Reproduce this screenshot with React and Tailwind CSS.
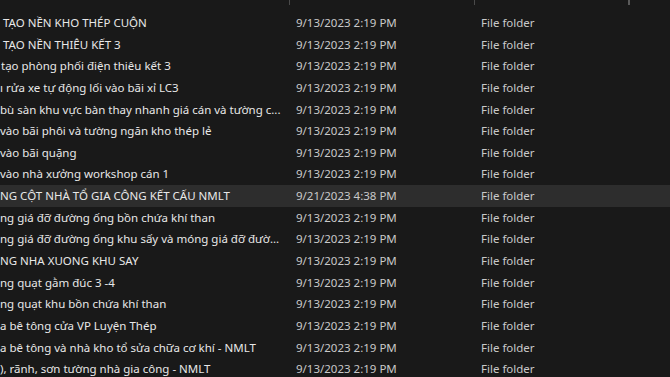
const rows = [
  { name: "TẠO NỀN KHO THÉP CUỘN", shift: "pl-[3px]", date: "9/13/2023 2:19 PM" },
  { name: "TẠO NỀN THIÊU KẾT 3", shift: "pl-[3px]", date: "9/13/2023 2:19 PM" },
  { name: "tạo phòng phối điện thiêu kết 3", shift: "pl-[1px]", date: "9/13/2023 2:19 PM" },
  { name: "ı rửa xe tự động lối vào bãi xỉ LC3", shift: "", date: "9/13/2023 2:19 PM" },
  { name: "bù sàn khu vực bàn thay nhanh giá cán và tường c...", shift: "", date: "9/13/2023 2:19 PM" },
  { name: "vào bãi phôi và tường ngăn kho thép lẻ", shift: "", date: "9/13/2023 2:19 PM" },
  { name: "vào bãi quặng", shift: "", date: "9/13/2023 2:19 PM" },
  { name: "vào nhà xưởng workshop cán 1", shift: "", date: "9/13/2023 2:19 PM" },
  { name: "NG CỘT NHÀ TỔ GIA CÔNG KẾT CẤU NMLT", shift: "", date: "9/21/2023 4:38 PM", active: true },
  { name: "ng giá đỡ đường ống bồn chứa khí than", shift: "", date: "9/13/2023 2:19 PM" },
  { name: "ng giá đỡ đường ống khu sấy và móng giá đỡ đườ...", shift: "", date: "9/13/2023 2:19 PM" },
  { name: "NG NHA XUONG KHU SAY", shift: "", date: "9/13/2023 2:19 PM" },
  { name: "ng quạt gằm đúc 3 -4", shift: "", date: "9/13/2023 2:19 PM" },
  { name: "ng quạt khu bồn chứa khí than", shift: "", date: "9/13/2023 2:19 PM" },
  { name: "a bê tông cửa VP Luyện Thép", shift: "", date: "9/13/2023 2:19 PM" },
  { name: "a bê tông và nhà kho tổ sửa chữa cơ khí - NMLT", shift: "", date: "9/13/2023 2:19 PM" },
  { name: "), rãnh, sơn tường nhà gia công - NMLT", shift: "", date: "9/13/2023 2:19 PM" },
];

export default function App() {
  return (
    <div
      className="w-[670px] h-[377px] overflow-hidden bg-[#191919] text-[11.5px]"
      style={{ fontFamily: '"Noto Sans", "Open Sans", sans-serif' }}
    >
      {/* header bottom edge with column dividers */}
      <div className="flex h-[5px]">
        <div className="w-[289px]" />
        <div className="w-px bg-[#4a4a4a]" />
        <div className="w-[184px]" />
        <div className="w-px bg-[#4a4a4a]" />
        <div className="w-[153px]" />
        <div className="w-[2px] bg-[#5a5a5a]" />
      </div>

      <div className="pt-[6.8px]">
        {rows.map((r, i) => (
          <div
            key={i}
            className={`flex items-center h-[21.65px] whitespace-nowrap ${r.active ? "bg-[#2d2d2d]" : ""}`}
          >
            <div className="w-[290px] text-[#e8e8e8]">
              <div className={r.shift}>{r.name}</div>
            </div>
            <div className="w-[184px] pl-[6px] text-[#c9c9c9]">{r.date}</div>
            <div className="w-[155px] pl-[7px] text-[#c9c9c9]">File folder</div>
          </div>
        ))}
      </div>
    </div>
  );
}
